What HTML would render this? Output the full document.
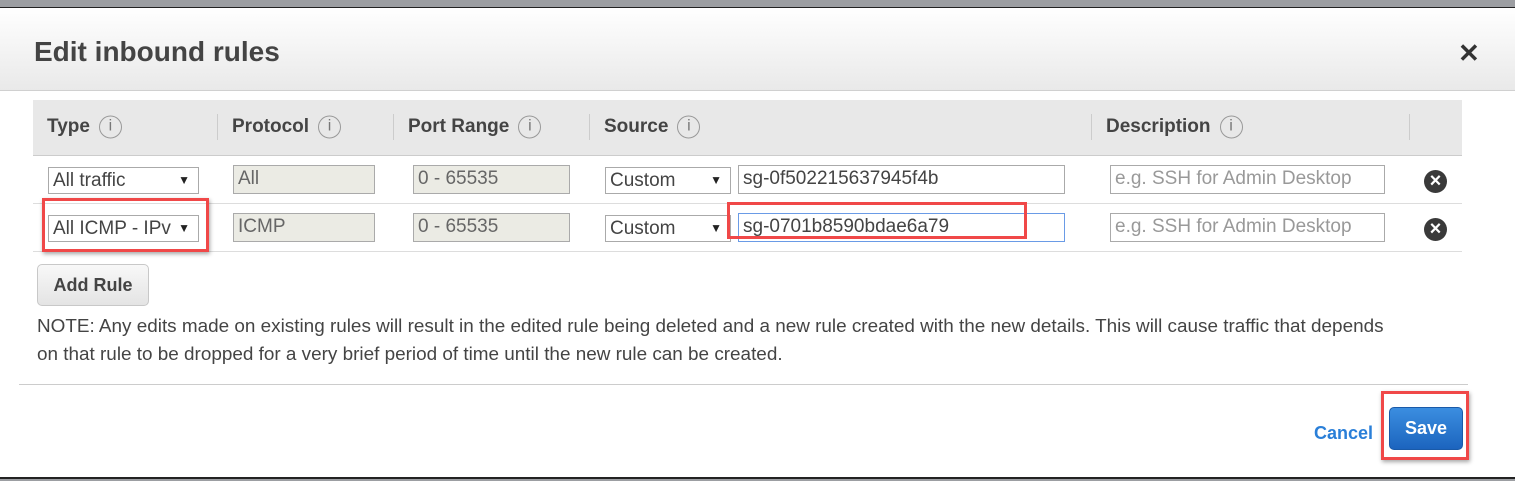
<!DOCTYPE html>
<html><head><meta charset="utf-8"><style>
*{box-sizing:border-box;margin:0;padding:0}
body{width:1515px;height:481px;overflow:hidden;position:relative;background:#fff;font-family:"Liberation Sans",Arial,sans-serif;color:#444}
.a{position:absolute}
.top{left:0;top:0;width:1515px;height:8px;background:#9c9ea2;border-bottom:1px solid #222;overflow:hidden}
.hdr{left:0;top:8px;width:1515px;height:83px;background:linear-gradient(#fff,#e9e9e9);border-bottom:1px solid #d0d0d0}
.title{left:34px;top:36px;font-size:28px;font-weight:bold;color:#444}
.th{left:33px;top:100px;width:1429px;height:56px;background:#e8e8e8;border-bottom:1px solid #ccc}
.hl{top:127px;font-size:19px;font-weight:bold;color:#444;transform:translateY(-50%)}
.i{display:inline-block;width:23px;height:23px;border:1.5px solid #999;border-radius:50%;font-size:16px;font-weight:normal;text-align:center;line-height:20px;color:#777;margin-left:9px;vertical-align:middle}
.sep{top:114px;width:1px;height:26px;background:#ccc}
.rl{left:33px;width:1429px;height:1px;background:#ddd}
.in{height:27px;border:1px solid #aaa;font-size:19px;line-height:25px;padding-left:4px;color:#444;background:#fff;white-space:nowrap;overflow:hidden}
.g{background:#ebebe4;color:#666}
.ph{color:#999}
.sel:after{content:"▼";position:absolute;right:8px;top:0;font-size:12px;color:#222}
.x{width:23px;height:23px;border-radius:50%;background:#3a3a3a;color:#fff;font-size:20px;font-weight:bold;text-align:center;line-height:23px}
.red{border:3px solid #f04848;box-shadow:1px 2px 4px rgba(0,0,0,.35)}
</style></head><body>
<div class="a top"></div>
<div class="a hdr"></div>
<div class="a title">Edit inbound rules</div>
<div class="a" style="left:1458px;top:38px;font-size:26px;color:#333;font-weight:bold">✕</div>
<div class="a th"></div>
<div class="a hl" style="left:47px">Type<span class="i">i</span></div>
<div class="a hl" style="left:232px">Protocol<span class="i">i</span></div>
<div class="a hl" style="left:408px">Port Range<span class="i">i</span></div>
<div class="a hl" style="left:604px">Source<span class="i">i</span></div>
<div class="a hl" style="left:1106px">Description<span class="i">i</span></div>
<div class="a sep" style="left:217px"></div><div class="a sep" style="left:393px"></div><div class="a sep" style="left:589px"></div><div class="a sep" style="left:1091px"></div><div class="a sep" style="left:1409px"></div>

<div class="a in sel" style="left:48px;top:167px;width:151px">All traffic</div>
<div class="a in g" style="left:233px;top:165px;width:142px;height:29px">All</div>
<div class="a in g" style="left:413px;top:165px;width:157px;height:29px">0 - 65535</div>
<div class="a in sel" style="left:605px;top:167px;width:126px">Custom</div>
<div class="a in" style="left:738px;top:165px;width:327px;height:29px">sg-0f502215637945f4b</div>
<div class="a in ph" style="left:1110px;top:165px;width:275px;height:29px">e.g. SSH for Admin Desktop</div>
<div class="a x" style="left:1424px;top:170px">×</div>
<div class="a rl" style="top:203px"></div>

<div class="a in sel" style="left:48px;top:215px;width:151px">All ICMP - IPv</div>
<div class="a in g" style="left:233px;top:213px;width:142px;height:29px">ICMP</div>
<div class="a in g" style="left:413px;top:213px;width:157px;height:29px">0 - 65535</div>
<div class="a in sel" style="left:605px;top:215px;width:126px">Custom</div>
<div class="a in" style="left:738px;top:213px;width:327px;height:29px;border-color:#6a9be6">sg-0701b8590bdae6a79</div>
<div class="a in ph" style="left:1110px;top:213px;width:275px;height:29px">e.g. SSH for Admin Desktop</div>
<div class="a x" style="left:1424px;top:218px">×</div>
<div class="a rl" style="top:251px"></div>
<div class="a red" style="left:42px;top:198px;width:167px;height:54px"></div>
<div class="a red" style="left:727px;top:202px;width:300px;height:37px;box-shadow:none"></div>

<div class="a" style="left:37px;top:264px;width:112px;height:42px;border:1px solid #c8c8c8;border-radius:5px;background:linear-gradient(#f8f8f8,#e4e4e4);font-size:18px;font-weight:bold;text-align:center;line-height:40px;color:#444">Add Rule</div>
<div class="a" style="left:37px;top:313px;width:1450px;font-size:18.9px;line-height:28px;color:#444;white-space:nowrap">NOTE: Any edits made on existing rules will result in the edited rule being deleted and a new rule created with the new details. This will cause traffic that depends<br>on that rule to be dropped for a very brief period of time until the new rule can be created.</div>
<div class="a" style="left:19px;top:384px;width:1449px;height:1px;background:#ccc"></div>
<div class="a" style="left:1314px;top:423px;font-size:18px;font-weight:bold;color:#2a7fd8">Cancel</div>
<div class="a" style="left:1389px;top:407px;width:74px;height:43px;border-radius:5px;background:linear-gradient(#3b8ee0,#1c64be);border:1px solid #1a5aa8;color:#fff;font-size:18px;font-weight:bold;text-align:center;line-height:40px">Save</div>
<div class="a red" style="left:1381px;top:391px;width:88px;height:69px"></div>
<div class="a" style="left:0;top:477px;width:1515px;height:4px;background:#9c9ea2;border-top:2px solid #222"></div>
</body></html>
